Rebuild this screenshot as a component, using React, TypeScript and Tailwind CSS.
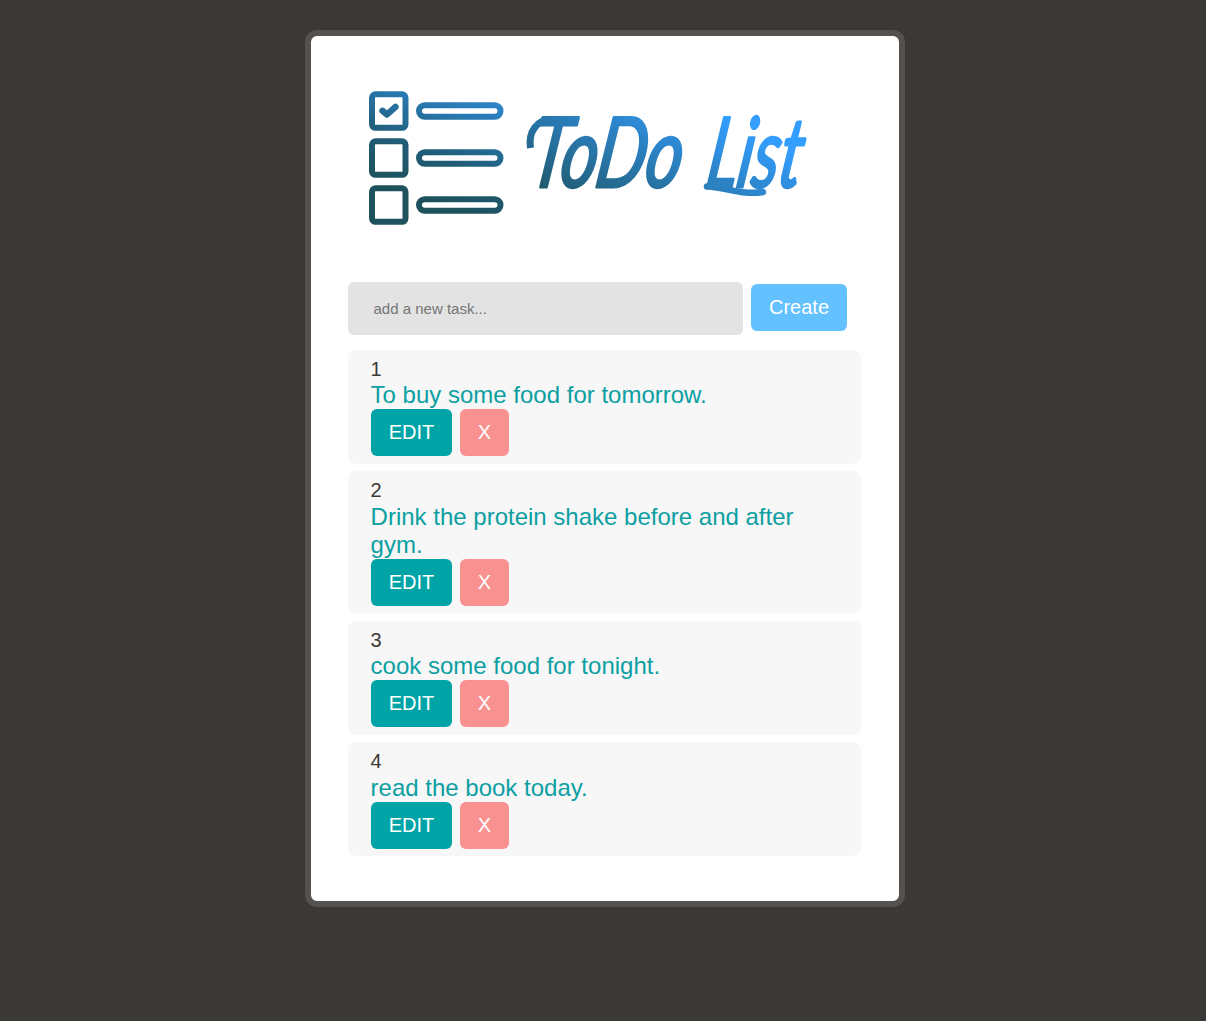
import { useState } from "react";

const initialTasks = [
  "To buy some food for tomorrow.",
  "Drink the protein shake before and after gym.",
  "cook some food for tonight.",
  "read the book today.",
];

function Logo() {
  return (
    <svg viewBox="348 66 513 216" className="block h-[216px] w-[513px]" role="img" aria-label="ToDo List">
      <defs>
        <linearGradient id="marks" gradientUnits="userSpaceOnUse" x1="470" y1="80" x2="425" y2="201">
          <stop offset="0" stopColor="#2f8bd3" />
          <stop offset="0.3" stopColor="#2877ae" />
          <stop offset="0.65" stopColor="#205c76" />
          <stop offset="1" stopColor="#1d515b" />
        </linearGradient>
        <linearGradient id="swash" gradientUnits="userSpaceOnUse" x1="580" y1="218" x2="650" y2="82">
          <stop offset="0" stopColor="#1f5666" />
          <stop offset="1" stopColor="#339eff" />
        </linearGradient>
        <linearGradient id="word" gradientUnits="userSpaceOnUse" x1="52" y1="30" x2="110" y2="-100">
          <stop offset="0" stopColor="#1f5666" />
          <stop offset="1" stopColor="#339eff" />
        </linearGradient>
      </defs>
      <g fill="none" stroke="url(#marks)" strokeWidth="6">
        {[94, 141, 188].map((y) => (
          <g key={y}>
            <rect x="372" y={y + 0.3} width="33.5" height="33.5" rx="3.5" />
            <rect x="419" y={y + 11.2} width="81.5" height="11.6" rx="5.8" />
          </g>
        ))}
        <path d="M382.5 110.8 L387 114.5 L395.5 106.8" strokeWidth="6.4" strokeLinecap="round" strokeLinejoin="round" />
      </g>
      <text
        transform="translate(534 187) skewX(-9)"
        fill="url(#word)"
        stroke="url(#word)"
        strokeWidth="3"
        strokeLinejoin="round"
        fontFamily="Lato, 'Liberation Sans', sans-serif"
        fontStyle="italic"
        fontWeight="400"
        fontSize="97"
      >
        <tspan x="-7" y="0" textLength="152" lengthAdjust="spacingAndGlyphs">ToDo</tspan>
        <tspan x="170" y="0" textLength="95" lengthAdjust="spacingAndGlyphs">List</tspan>
      </text>
      <g fill="none" stroke="url(#swash)">
        <path d="M530.5 148 C528 132 537 119.5 551 119.5 H560" strokeWidth="7" />
        <path d="M707 186.5 C728 187.5 742 195.5 763 192" strokeWidth="6.5" strokeLinecap="round" />
      </g>
    </svg>
  );
}

function Task({ index, text }: { index: number; text: string }) {
  return (
    <li className="rounded-lg bg-[#f7f7f7] pt-[7.7px] pr-[23px] pb-[7.5px] pl-[22.6px]">
      <div className="h-[23.5px] text-xl leading-[23.5px] text-[#3b3935]">{index}</div>
      <p className="text-2xl leading-7 text-[#0c9fa2]">{text}</p>
      <div className="ml-[0.4px] flex gap-2">
        <button className="h-[47px] w-[81px] rounded-md bg-[#00a4a6] pb-px text-xl text-white">EDIT</button>
        <button className="h-[47px] w-[49px] rounded-md bg-[#fa9191] pb-px text-xl text-white">X</button>
      </div>
    </li>
  );
}

export default function App() {
  const [tasks, setTasks] = useState(initialTasks);
  const [draft, setDraft] = useState("");

  return (
    <div className="min-h-screen bg-[#3b3935] pt-[30px] font-['Liberation_Sans',Arial,sans-serif]">
      <main className="ml-[305px] h-[877px] w-[600px] rounded-xl border-6 border-[#55514e] bg-white px-[37px] pt-[30px]">
        <Logo />
        <form
          className="flex gap-2"
          onSubmit={(e) => {
            e.preventDefault();
            if (draft.trim()) {
              setTasks([...tasks, draft.trim()]);
              setDraft("");
            }
          }}
        >
          <input
            value={draft}
            onChange={(e) => setDraft(e.target.value)}
            placeholder="add a new task..."
            className="h-[53px] w-[395px] rounded-md bg-[#e3e3e3] px-[25.5px] text-[15px] text-[#3b3935] outline-none placeholder:text-[#757575]"
          />
          <button className="mt-0.5 h-[47px] w-24 rounded-md bg-[#63c1ff] pb-px text-xl text-white">Create</button>
        </form>
        <ul className="mt-[15px] flex w-[513px] flex-col gap-[7.8px]">
          {tasks.map((text, i) => (
            <Task key={i} index={i + 1} text={text} />
          ))}
        </ul>
      </main>
    </div>
  );
}
